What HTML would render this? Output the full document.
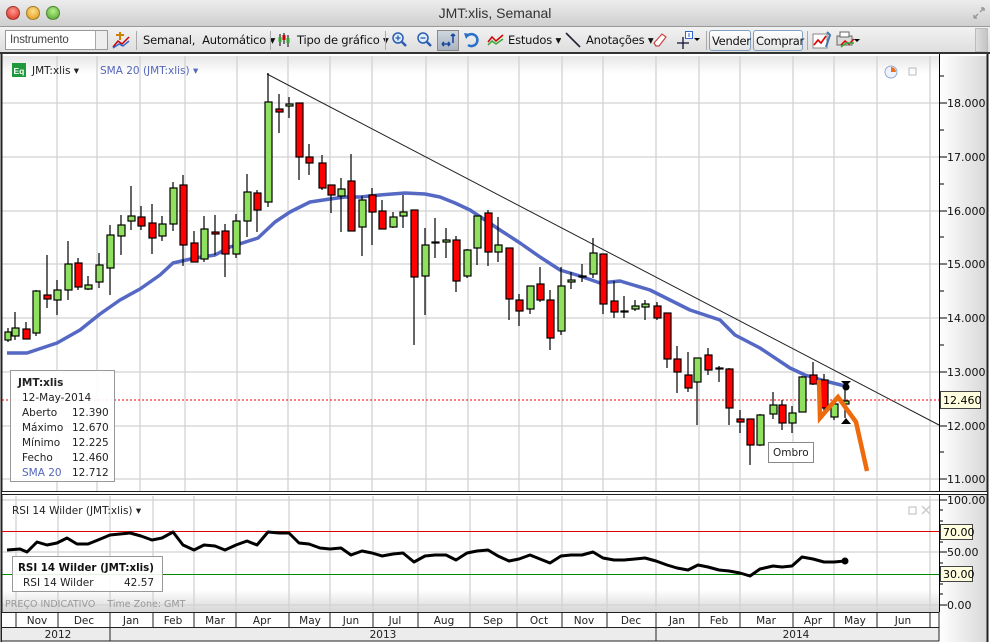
<!DOCTYPE html>
<html><head><meta charset="utf-8"><style>
*{margin:0;padding:0;box-sizing:border-box}
body{width:990px;height:642px;overflow:hidden;background:#fff;font-family:"Liberation Sans",sans-serif;position:relative}
.title{position:absolute;left:0;top:0;width:990px;height:27px;background:linear-gradient(#ededed,#cfcfcf);border-bottom:1px solid #999}
.title .t{position:absolute;left:0;width:990px;text-align:center;top:5px;font-size:14px;color:#333}
.dot{position:absolute;top:6px;width:14px;height:14px;border-radius:50%;border:1px solid rgba(0,0,0,.3)}
.tb{position:absolute;left:0;top:27px;width:990px;height:27px;background:linear-gradient(#f2f2f2,#dedede);border-bottom:2px solid #333;font-size:11.5px;color:#111;font-family:"DejaVu Sans",sans-serif}
.tb span{position:absolute;top:6px;white-space:nowrap;letter-spacing:-0.2px}
.sep{position:absolute;top:4px;width:1px;height:19px;background:#aaa}
.btn{position:absolute;top:3px;height:21px;border:1px solid #7fa0c0;border-radius:3px;background:linear-gradient(#fff,#e4e4e4);font-size:11.5px;padding:3px 2px;letter-spacing:-0.3px}
</style></head><body>
<div class="title"><div class="dot" style="left:6px;background:radial-gradient(circle at 50% 35%,#ff9a90,#d9261b)"></div><div class="dot" style="left:26px;background:radial-gradient(circle at 50% 35%,#ffe08a,#dc9512)"></div><div class="dot" style="left:46px;background:radial-gradient(circle at 50% 35%,#b8f08a,#4aa22a)"></div><div class="t">JMT:xlis, Semanal</div>
<svg style="position:absolute;left:972px;top:6px" width="14" height="14"><path d="M2 12 L6 8 M2 12 V9 M2 12 H5 M12 2 L8 6 M12 2 V5 M12 2 H9" stroke="#999" stroke-width="1.5" fill="none"/></svg></div>
<div class="tb">
<div style="position:absolute;left:5px;top:3px;width:103px;height:20px;border:1px solid #999;background:#fff"><span style="left:4px;top:3px;font-size:11.5px;color:#444;font-family:'Liberation Sans',sans-serif">Instrumento</span><div style="position:absolute;right:0;top:0;width:12px;height:18px;border-left:1px solid #aaa;background:#eee"></div></div>
<svg style="position:absolute;left:112px;top:4px" width="18" height="18"><path d="M8 1 V9 M4 4 H12" stroke="#d08000" stroke-width="2"/><path d="M1 16 L6 10 L10 13 L17 6" stroke="#c00" stroke-width="1.5" fill="none"/><path d="M1 17 L7 13 L11 15 L17 10" stroke="#36c" stroke-width="1.5" fill="none"/></svg>
<div class="sep" style="left:136px"></div>
<span style="left:143px">Semanal,&nbsp; Automático ▾</span>
<div class="sep" style="left:270px"></div>
<svg style="position:absolute;left:278px;top:5px" width="12" height="16"><path d="M2 2V14M6 1V12M10 3V15" stroke="#000"/><rect x="0.5" y="5" width="3" height="5" fill="#3a3"/><rect x="4.5" y="3" width="3" height="5" fill="#c00"/><rect x="8.5" y="6" width="3" height="5" fill="#3a3"/></svg>
<span style="left:297px">Tipo de gráfico ▾</span>
<div class="sep" style="left:385px"></div>
<svg style="position:absolute;left:392px;top:4px" width="16" height="18"><circle cx="6" cy="7" r="5" fill="#dfeeff" stroke="#2a5db0" stroke-width="1.5"/><path d="M3.5 7H8.5M6 4.5V9.5" stroke="#2a5db0" stroke-width="1.3"/><path d="M10 11L14 15" stroke="#2a5db0" stroke-width="2.5"/></svg>
<svg style="position:absolute;left:417px;top:4px" width="16" height="18"><circle cx="6" cy="7" r="5" fill="#dfeeff" stroke="#2a5db0" stroke-width="1.5"/><path d="M3.5 7H8.5" stroke="#2a5db0" stroke-width="1.3"/><path d="M10 11L14 15" stroke="#2a5db0" stroke-width="2.5"/></svg>
<div style="position:absolute;left:437px;top:3px;width:22px;height:21px;border:1px solid #888;background:linear-gradient(#cfd6de,#aab4c0)"></div>
<svg style="position:absolute;left:440px;top:5px" width="18" height="17"><path d="M2 12H10M2 12L4 10M2 12L4 14M10 12L8 10M10 12L8 14M13 2V11M13 2L11 4M13 2L15 4" stroke="#1c4aa0" stroke-width="1.6" fill="none"/></svg>
<svg style="position:absolute;left:463px;top:4px" width="18" height="18"><path d="M4 5 A6 6 0 1 1 5 14" stroke="#2a70c8" stroke-width="2.5" fill="none"/><path d="M1 2 L7 3 L3 8Z" fill="#2a70c8"/></svg>
<svg style="position:absolute;left:487px;top:5px" width="18" height="16"><path d="M1 10 L5 5 L9 9 L16 3" stroke="#c00" stroke-width="1.5" fill="none"/><path d="M1 13 L5 9 L9 12 L16 7" stroke="#3a3" stroke-width="1.5" fill="none"/></svg>
<span style="left:508px">Estudos ▾</span>
<svg style="position:absolute;left:565px;top:4px" width="16" height="18"><path d="M1 2 L15 16" stroke="#223" stroke-width="1.6"/></svg>
<span style="left:586px">Anotações ▾</span>
<svg style="position:absolute;left:653px;top:5px" width="14" height="16"><path d="M3 14 L1 11 L9 2 L13 5 L6 14Z" fill="#fff" stroke="#c44" stroke-width="1.2"/></svg>
<svg style="position:absolute;left:676px;top:3px" width="24" height="20"><path d="M1 13H13M7 7V19" stroke="#113" stroke-width="1.3"/><rect x="9.5" y="1.5" width="7" height="7" fill="#fff" stroke="#36c"/><path d="M13 3V7" stroke="#36c"/><path d="M18 8 L24 8 L21 11Z" fill="#000"/></svg>
<div class="sep" style="left:706px"></div>
<div class="btn" style="left:709px;width:42px">Vender</div>
<div class="btn" style="left:753px;width:50px">Comprar</div>
<div class="sep" style="left:807px"></div>
<svg style="position:absolute;left:812px;top:3px" width="20" height="20"><rect x="1" y="4" width="14" height="14" fill="#fff" stroke="#888"/><path d="M2 15 L6 10 L9 13 L14 6" stroke="#d00" stroke-width="1.6" fill="none"/><path d="M15 2 L18 5 L14 17" stroke="#4477aa" stroke-width="2" fill="none"/></svg>
<svg style="position:absolute;left:835px;top:4px" width="26" height="18"><rect x="2" y="5" width="15" height="9" fill="#ddd" stroke="#666"/><rect x="5" y="1" width="9" height="5" fill="#fff" stroke="#666"/><path d="M6 14 L10 10 L14 13 L19 8" stroke="#d00" stroke-width="1.5" fill="none"/><path d="M6 16 L11 12 L19 12" stroke="#3a3" stroke-width="1.5" fill="none"/><path d="M19 8 L25 8 L22 11Z" fill="#000"/></svg>
<div style="position:absolute;left:975px;top:1px;width:13px;height:24px;background:linear-gradient(90deg,#ddd,#c4c4c4);border:1px solid #bbb"></div>
</div>

<svg style="position:absolute;left:0;top:54px" width="990" height="588" viewBox="0 54 990 588" font-family="DejaVu Sans,Verdana,sans-serif">
<defs><linearGradient id="ax" x1="0" x2="1"><stop offset="0" stop-color="#fff"/><stop offset="1" stop-color="#d8d8d8"/></linearGradient>
<linearGradient id="fd" x1="0" y1="0" x2="0" y2="1"><stop offset="0" stop-color="#fff"/><stop offset="1" stop-color="#d6d6d6"/></linearGradient>
<linearGradient id="tp" x1="0" y1="0" x2="0" y2="1"><stop offset="0" stop-color="#e6e6e6"/><stop offset="1" stop-color="#fff"/></linearGradient></defs>
<rect x="0" y="54" width="990" height="588" fill="#fff"/>
<rect x="2" y="56" width="937" height="18" fill="url(#tp)"/>
<rect x="939" y="56" width="48" height="586" fill="url(#ax)"/>
<rect x="2" y="590" width="937" height="22" fill="url(#fd)"/>
<g stroke="#d2d2d2" stroke-width="1.3">
<path d="M57 56V492M97 56V492M140 56V492M185 56V492M237 56V492M288 56V492M330 56V492M372 56V492M426 56V492M468 56V492M519 56V492M562 56V492M603 56V492M656 56V492M699 56V492M740 56V492M793 56V492M834 56V492M877 56V492M930 56V492"/>
<path d="M16 496V612M58 496V612M110 496V612M153 496V612M194 496V612M236 496V612M289 496V612M330 496V612M373 496V612M418 496V612M470 496V612M517 496V612M562 496V612M607 496V612M656 496V612M699 496V612M740 496V612M793 496V612M834 496V612M877 496V612M930 496V612"/>
<path d="M2 103H939M2 157H939M2 211H939M2 264H939M2 318H939M2 372H939M2 426H939M2 479H939"/>
<path d="M2 500H939M2 552H939M2 605H939"/>
</g>
<path d="M1.5 54V642M987.5 54V642" stroke="#222" stroke-width="2"/>
<rect x="12" y="63" width="14" height="14" fill="#1e9a3a"/><text x="13.5" y="74" font-size="8.5" fill="#fff" font-family="Liberation Sans,sans-serif" font-weight="bold">Eq</text>
<text x="32" y="74" font-size="10.5" fill="#222">JMT:xlis ▾</text>
<text x="100" y="74" font-size="10.5" fill="#5566bb">SMA 20 (JMT:xlis) ▾</text>
<circle cx="891" cy="72" r="6" fill="#eef3fb" stroke="#99aacc"/><path d="M891 72V67A5 5 0 0 1 896 72Z" fill="#e87020"/>
<rect x="909" y="68" width="7" height="7" fill="none" stroke="#bbb"/>
<polyline fill="none" stroke="#5468c4" stroke-width="3.5" stroke-linejoin="round" points="7,353 27,353 57,343 80,330 100,314 120,300 140,289 160,275 173,263 195,258 215,255 230,247 258,238 275,222 290,212 310,202 330,199 345,197 360,197 380,195 405,193 425,194 440,197 455,203 470,210 485,220 500,230 520,243 540,257 560,270 580,276 600,283 620,281 650,290 670,300 690,310 720,320 735,335 760,348 790,368 805,375 825,381 845,386"/>
<path d="M267 74L939 425" stroke="#222" stroke-width="1"/>
<path d="M2 400H939" stroke="#e00" stroke-dasharray="2,2"/>
<g stroke="#000" stroke-width="1.2">
<path d="M8 328V342M15 312V340M26 322V339M36 290V336M47 255V308M57 280V315M68 241V300M78 258V290M88 276V290M99 253V288M110 225V295M121 215V255M131 186V230M141 206V230M152 204V254M162 216V241M173 182V231M183 175V266M194 231V262M204 216V262M215 215V255M225 224V277M236 214V258M247 174V237M257 190V232M268 73V207M279 94V133M289 97V118M299 103V180M309 144V175M322 155V190M331 185V213M341 178V232M351 154V231M362 196V256M372 188V245M382 200V229M393 212V228M403 195V228M414 210V345M425 228V315M435 218V258M446 228V258M456 236V292M467 249V278M477 216V265M488 210V266M498 217V262M509 248V320M519 294V326M530 286V314M540 267V302M550 290V350M561 267V335M571 272V289M582 264V282M593 238V278M603 254V314M614 281V318M624 296V318M635 300V311M645 300V320M657 302V320M667 313V368M677 346V393M688 352V392M697 358V425M708 348V375M719 366V382M729 368V425M740 410V433M750 419V465M760 414V446M773 392V419M782 400V430M792 406V433M802 376V412M813 362V385M824 374V415M834 404V420M845 390V418"/>
</g>
<g stroke="#000" stroke-width="1.2">
<rect x="5" y="332" width="6" height="8" fill="#90e060"/>
<rect x="12" y="328" width="7" height="8" fill="#90e060"/>
<rect x="23" y="329" width="7" height="10" fill="#f00"/>
<rect x="33" y="291" width="7" height="42" fill="#90e060"/>
<rect x="44" y="295" width="7" height="4" fill="#f00"/>
<rect x="54" y="290" width="7" height="10" fill="#90e060"/>
<rect x="65" y="264" width="7" height="26" fill="#90e060"/>
<rect x="75" y="263" width="7" height="24" fill="#f00"/>
<rect x="85" y="285" width="7" height="4" fill="#90e060"/>
<rect x="96" y="265" width="7" height="17" fill="#90e060"/>
<rect x="107" y="235" width="7" height="33" fill="#90e060"/>
<rect x="118" y="225" width="7" height="11" fill="#90e060"/>
<rect x="128" y="216" width="7" height="5" fill="#90e060"/>
<rect x="138" y="217" width="7" height="9" fill="#f00"/>
<rect x="149" y="223" width="7" height="15" fill="#f00"/>
<rect x="159" y="224" width="7" height="12" fill="#90e060"/>
<rect x="170" y="188" width="7" height="36" fill="#90e060"/>
<rect x="180" y="185" width="7" height="60" fill="#f00"/>
<rect x="191" y="243" width="7" height="19" fill="#f00"/>
<rect x="201" y="229" width="7" height="30" fill="#90e060"/>
<rect x="212" y="232" width="7" height="2" fill="#f00"/>
<rect x="222" y="231" width="7" height="23" fill="#f00"/>
<rect x="233" y="221" width="7" height="33" fill="#90e060"/>
<rect x="244" y="192" width="7" height="29" fill="#90e060"/>
<rect x="254" y="193" width="7" height="17" fill="#f00"/>
<rect x="265" y="102" width="7" height="100" fill="#90e060"/>
<rect x="276" y="109" width="7" height="3" fill="#f00"/>
<rect x="286" y="104" width="7" height="2" fill="#90e060"/>
<rect x="296" y="103" width="7" height="54" fill="#f00"/>
<rect x="306" y="157" width="7" height="6" fill="#f00"/>
<rect x="319" y="163" width="7" height="25" fill="#f00"/>
<rect x="328" y="185" width="7" height="10" fill="#f00"/>
<rect x="338" y="189" width="7" height="7" fill="#90e060"/>
<rect x="348" y="181" width="7" height="50" fill="#f00"/>
<rect x="359" y="200" width="7" height="27" fill="#90e060"/>
<rect x="369" y="195" width="7" height="17" fill="#f00"/>
<rect x="379" y="211" width="7" height="18" fill="#f00"/>
<rect x="390" y="217" width="7" height="10" fill="#90e060"/>
<rect x="400" y="212" width="7" height="4" fill="#90e060"/>
<rect x="411" y="210" width="7" height="67" fill="#f00"/>
<rect x="422" y="245" width="7" height="31" fill="#90e060"/>
<rect x="432" y="242" width="7" height="1" fill="#000"/>
<rect x="443" y="240" width="7" height="2" fill="#90e060"/>
<rect x="453" y="240" width="7" height="41" fill="#f00"/>
<rect x="464" y="250" width="7" height="26" fill="#90e060"/>
<rect x="474" y="216" width="7" height="32" fill="#90e060"/>
<rect x="485" y="213" width="7" height="39" fill="#f00"/>
<rect x="495" y="245" width="7" height="7" fill="#90e060"/>
<rect x="506" y="248" width="7" height="51" fill="#f00"/>
<rect x="516" y="300" width="7" height="11" fill="#f00"/>
<rect x="527" y="286" width="7" height="23" fill="#90e060"/>
<rect x="537" y="284" width="7" height="16" fill="#f00"/>
<rect x="547" y="300" width="7" height="38" fill="#f00"/>
<rect x="558" y="286" width="7" height="45" fill="#90e060"/>
<rect x="568" y="280" width="7" height="2" fill="#90e060"/>
<rect x="579" y="276" width="7" height="1" fill="#000"/>
<rect x="590" y="253" width="7" height="21" fill="#90e060"/>
<rect x="600" y="254" width="7" height="50" fill="#f00"/>
<rect x="611" y="301" width="7" height="11" fill="#f00"/>
<rect x="621" y="311" width="7" height="1" fill="#000"/>
<rect x="632" y="306" width="7" height="3" fill="#90e060"/>
<rect x="642" y="304" width="7" height="3" fill="#90e060"/>
<rect x="654" y="306" width="7" height="12" fill="#f00"/>
<rect x="664" y="313" width="7" height="46" fill="#f00"/>
<rect x="674" y="359" width="7" height="13" fill="#f00"/>
<rect x="685" y="375" width="7" height="13" fill="#f00"/>
<rect x="694" y="358" width="7" height="24" fill="#90e060"/>
<rect x="705" y="355" width="7" height="15" fill="#f00"/>
<rect x="716" y="368" width="7" height="1" fill="#000"/>
<rect x="726" y="369" width="7" height="39" fill="#f00"/>
<rect x="737" y="419" width="7" height="3" fill="#f00"/>
<rect x="747" y="419" width="7" height="26" fill="#f00"/>
<rect x="757" y="415" width="7" height="30" fill="#90e060"/>
<rect x="770" y="405" width="7" height="9" fill="#90e060"/>
<rect x="779" y="405" width="7" height="18" fill="#f00"/>
<rect x="789" y="413" width="7" height="10" fill="#90e060"/>
<rect x="799" y="377" width="7" height="35" fill="#90e060"/>
<rect x="810" y="375" width="7" height="9" fill="#f00"/>
<rect x="821" y="380" width="7" height="28" fill="#f00"/>
<rect x="831" y="404" width="7" height="13" fill="#90e060"/>
<rect x="842" y="401" width="7" height="3" fill="#90e060"/>
</g>
<path d="M841 381H851L846 386Z M841 424H851L846 418Z" fill="#000"/><circle cx="846" cy="387" r="3.5" fill="#000"/>
<polyline points="819,380 820,418 838,397 856,422 867,471" fill="none" stroke="#ee6a0c" stroke-width="4.5" stroke-linejoin="miter"/>
<rect x="768.5" y="442.5" width="45" height="20" fill="#fff" stroke="#888"/><text x="773" y="456" font-size="10.5" fill="#222">Ombro</text>
<rect x="10.5" y="370.5" width="104" height="111" fill="#fff" fill-opacity="0.9" stroke="#999"/>
<g font-size="10.5" fill="#222"><text x="18" y="386" font-weight="bold">JMT:xlis</text><text x="22" y="401">12-May-2014</text>
<text x="22" y="416">Aberto</text><text x="72" y="416">12.390</text>
<text x="22" y="431">Máximo</text><text x="72" y="431">12.670</text>
<text x="22" y="446">Mínimo</text><text x="72" y="446">12.225</text>
<text x="22" y="461">Fecho</text><text x="72" y="461">12.460</text>
<text x="22" y="476" fill="#5566bb">SMA 20</text><text x="72" y="476">12.712</text></g>
<path d="M939.5 54V492" stroke="#000"/>
<g stroke="#000"><path d="M939 76h5M939 103h8M939 130h5M939 157h8M939 184h5M939 211h8M939 237h5M939 264h8M939 291h5M939 318h8M939 345h5M939 372h8M939 399h5M939 426h8M939 452h5M939 479h8"/></g>
<g font-size="11" fill="#111"><text x="947" y="107">18.000</text><text x="947" y="161">17.000</text><text x="947" y="215">16.000</text><text x="947" y="268">15.000</text><text x="947" y="322">14.000</text><text x="947" y="376">13.000</text><text x="947" y="430">12.000</text><text x="947" y="483">11.000</text></g>
<rect x="940.5" y="391.5" width="40" height="17" fill="#ffffe0" stroke="#444"/><text x="943" y="404" font-size="11">12.460</text>
<rect x="2" y="491" width="985" height="4" fill="#fff"/><path d="M2 491.5H987M2 494.5H987" stroke="#222"/>
<text x="12" y="514" font-size="10.5" fill="#222">RSI 14 Wilder (JMT:xlis) ▾</text>
<rect x="909" y="507" width="7" height="7" fill="none" stroke="#bbb"/><path d="M922 506L930 514M930 506L922 514" stroke="#ccc" stroke-width="1.5"/>
<path d="M2 531.5H939" stroke="#d00"/><path d="M2 574.5H939" stroke="#080"/>
<polyline fill="none" stroke="#000" stroke-width="3" stroke-linejoin="round" points="7,550 20,549 27,552 37,542 47,545 57,543 67,538 77,544 88,544 98,540 110,535 120,534 130,533 141,536 152,540 162,538 173,532 183,545 194,550 204,545 215,546 225,550 236,545 247,541 257,545 268,532 279,533 289,533 299,543 309,544 320,548 330,549 341,548 351,555 362,551 372,553 382,556 393,554 403,553 414,562 425,556 435,555 446,555 456,560 467,553 477,551 488,550 498,556 509,561 519,559 530,555 540,559 550,563 561,556 571,555 582,555 593,552 603,558 614,560 624,560 635,559 645,558 656,561 667,565 677,568 688,570 698,565 708,567 719,570 729,571 740,573 750,576 760,569 773,566 782,567 792,566 802,557 813,559 824,562 834,562 845,561"/>
<circle cx="845" cy="561" r="3.5"/>
<rect x="12.5" y="556.5" width="150" height="35" fill="#fff" fill-opacity="0.9" stroke="#999"/>
<text x="18" y="571" font-size="10.3" font-weight="bold" fill="#111" textLength="136">RSI 14 Wilder (JMT:xlis)</text>
<text x="23" y="586" font-size="10.5" fill="#222">RSI 14 Wilder</text><text x="124" y="586" font-size="10.5" fill="#222">42.57</text>
<text x="5" y="607" font-size="9.5" fill="#999">PREÇO INDICATIVO&#160;&#160;&#160; Time Zone: GMT</text>
<path d="M939.5 494V612" stroke="#000"/>
<g stroke="#000"><path d="M939 500h8M939 510h4M939 521h4M939 531h4M939 542h4M939 552h8M939 563h4M939 573h4M939 584h4M939 594h4M939 605h8"/></g>
<g font-size="11" fill="#111"><text x="947" y="504">100.00</text><text x="947" y="556">50.00</text><text x="947" y="609">0.00</text></g>
<rect x="940.5" y="524.5" width="32" height="15" fill="#ffffe0" stroke="#444"/><text x="943" y="536" font-size="11">70.00</text>
<rect x="940.5" y="566.5" width="32" height="15" fill="#ffffe0" stroke="#444"/><text x="943" y="578" font-size="11">30.00</text>
<rect x="2" y="612" width="937" height="30" fill="#fff"/>
<rect x="2" y="627" width="937" height="14" fill="#ececec"/>
<path d="M2 612.5H939M2 627.5H939M2 641H939" stroke="#222"/>
<g stroke="#222"><path d="M16 612V627M58 612V627M110 612V641M153 612V627M194 612V627M236 612V627M289 612V627M330 612V627M373 612V627M418 612V627M470 612V627M517 612V627M562 612V627M607 612V627M656 612V641M699 612V627M740 612V627M793 612V627M834 612V627M877 612V627M930 612V627M939 612V641"/></g>
<g font-size="10.5" fill="#222" text-anchor="middle"><text x="37" y="624">Nov</text><text x="84" y="624">Dec</text><text x="131" y="624">Jan</text><text x="173" y="624">Feb</text><text x="215" y="624">Mar</text><text x="262" y="624">Apr</text><text x="310" y="624">May</text><text x="351" y="624">Jun</text><text x="395" y="624">Jul</text><text x="444" y="624">Aug</text><text x="493" y="624">Sep</text><text x="539" y="624">Oct</text><text x="584" y="624">Nov</text><text x="631" y="624">Dec</text><text x="677" y="624">Jan</text><text x="719" y="624">Feb</text><text x="766" y="624">Mar</text><text x="813" y="624">Apr</text><text x="855" y="624">May</text><text x="903" y="624">Jun</text>
<text x="58" y="638">2012</text><text x="383" y="638">2013</text><text x="796" y="638">2014</text></g>
</svg>
</body></html>
